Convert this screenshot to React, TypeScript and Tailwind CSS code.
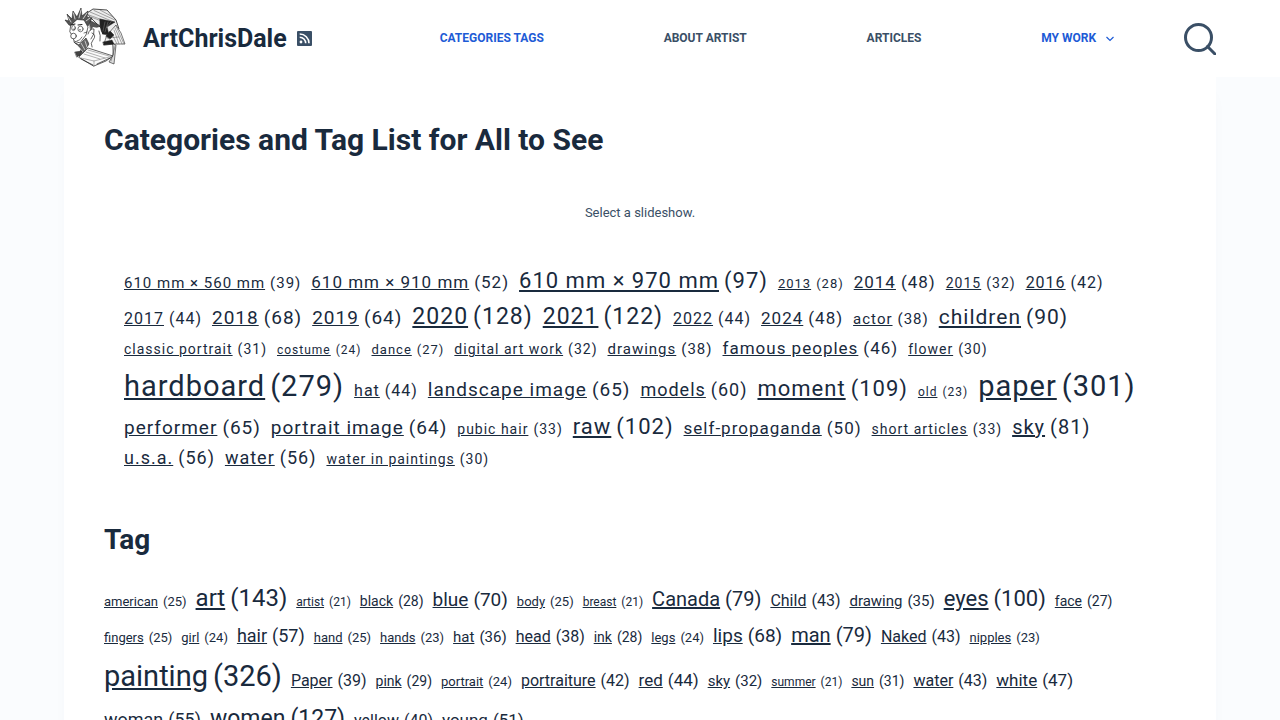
import type { ReactNode } from 'react';

interface Tag {
  name: string;
  count: number;
}

const categories: Tag[] = [
  { name: '610 mm × 560 mm', count: 39 },
  { name: '610 mm × 910 mm', count: 52 },
  { name: '610 mm × 970 mm', count: 97 },
  { name: '2013', count: 28 },
  { name: '2014', count: 48 },
  { name: '2015', count: 32 },
  { name: '2016', count: 42 },
  { name: '2017', count: 44 },
  { name: '2018', count: 68 },
  { name: '2019', count: 64 },
  { name: '2020', count: 128 },
  { name: '2021', count: 122 },
  { name: '2022', count: 44 },
  { name: '2024', count: 48 },
  { name: 'actor', count: 38 },
  { name: 'children', count: 90 },
  { name: 'classic portrait', count: 31 },
  { name: 'costume', count: 24 },
  { name: 'dance', count: 27 },
  { name: 'digital art work', count: 32 },
  { name: 'drawings', count: 38 },
  { name: 'famous peoples', count: 46 },
  { name: 'flower', count: 30 },
  { name: 'hardboard', count: 279 },
  { name: 'hat', count: 44 },
  { name: 'landscape image', count: 65 },
  { name: 'models', count: 60 },
  { name: 'moment', count: 109 },
  { name: 'old', count: 23 },
  { name: 'paper', count: 301 },
  { name: 'performer', count: 65 },
  { name: 'portrait image', count: 64 },
  { name: 'pubic hair', count: 33 },
  { name: 'raw', count: 102 },
  { name: 'self-propaganda', count: 50 },
  { name: 'short articles', count: 33 },
  { name: 'sky', count: 81 },
  { name: 'u.s.a.', count: 56 },
  { name: 'water', count: 56 },
  { name: 'water in paintings', count: 30 },
];

const tags: Tag[] = [
  { name: 'american', count: 25 },
  { name: 'art', count: 143 },
  { name: 'artist', count: 21 },
  { name: 'black', count: 28 },
  { name: 'blue', count: 70 },
  { name: 'body', count: 25 },
  { name: 'breast', count: 21 },
  { name: 'Canada', count: 79 },
  { name: 'Child', count: 43 },
  { name: 'drawing', count: 35 },
  { name: 'eyes', count: 100 },
  { name: 'face', count: 27 },
  { name: 'fingers', count: 25 },
  { name: 'girl', count: 24 },
  { name: 'hair', count: 57 },
  { name: 'hand', count: 25 },
  { name: 'hands', count: 23 },
  { name: 'hat', count: 36 },
  { name: 'head', count: 38 },
  { name: 'ink', count: 28 },
  { name: 'legs', count: 24 },
  { name: 'lips', count: 68 },
  { name: 'man', count: 79 },
  { name: 'Naked', count: 43 },
  { name: 'nipples', count: 23 },
  { name: 'painting', count: 326 },
  { name: 'Paper', count: 39 },
  { name: 'pink', count: 29 },
  { name: 'portrait', count: 24 },
  { name: 'portraiture', count: 42 },
  { name: 'red', count: 44 },
  { name: 'sky', count: 32 },
  { name: 'summer', count: 21 },
  { name: 'sun', count: 31 },
  { name: 'water', count: 43 },
  { name: 'white', count: 47 },
  { name: 'woman', count: 55 },
  { name: 'women', count: 127 },
  { name: 'yellow', count: 40 },
  { name: 'young', count: 51 },
];

const SMALLEST = 12;
const LARGEST = 29.2;

// Logarithmic weight, so one very common tag does not flatten the others.
const weight = (count: number) => Math.log10(count + 1);

function TagCloud({ items, className = '' }: { items: Tag[]; className?: string }) {
  const weights = items.map((item) => weight(item.count));
  const min = Math.min(...weights);
  const step = (LARGEST - SMALLEST) / (Math.max(...weights) - min);

  return (
    <p className={`text-[#192a3d] ${className}`}>
      {items.map((item, i) => (
        <span key={item.name}>
          <a
            href="#"
            className="mr-[5px] inline-block hover:text-[#1d5bd6]"
            style={{ fontSize: Math.round(SMALLEST + (weights[i] - min) * step) }}
          >
            <span className="underline">{item.name}</span>
            <span className="ml-[5px] inline-block">({item.count})</span>
          </a>{' '}
        </span>
      ))}
    </p>
  );
}

function NavLink({ active = false, children }: { active?: boolean; children: ReactNode }) {
  return (
    <a
      href="#"
      className={`flex items-center text-xs leading-5 font-bold uppercase ${active ? 'text-[#1d5bd6]' : 'text-[#3a4f66]'}`}
    >
      {children}
    </a>
  );
}

function Logo() {
  return (
    <svg viewBox="0 0 64 64" className="size-16 shrink-0" fill="none" stroke="#222" strokeLinejoin="round" strokeLinecap="round" aria-hidden="true">
      {/* hood */}
      <path d="M23 6 L29 2 L43 3 L52 13 L55 22 L47 28 L42 25 L36 20 L28 12Z" fill="#ececec" strokeWidth=".8" />
      <path d="M26 5 L50 15 M30 3.500 L51 13 M25 8 L44 15 M36 3 L49 10 M27 10 L40 15" stroke="#555" strokeWidth=".5" />
      <path d="M36 12 L51 15 L43 20 L45 28 L38 27 L36 19Z" fill="#222" strokeWidth=".5" />
      <path d="M41 15 L39 24 M44 15 L41 25 M47 15 L42 21" stroke="#999" strokeWidth=".4" />
      <path d="M25 13 L37 19 L31 21 L27 24Z" fill="#555" strokeWidth=".5" />
      {/* hair */}
      <path d="M5 18 L1 13 L5 14 L3 7 L8 12 L9 4 L13 10 L17 1 L18 9 L24 4 L23 10 L28 11 L24 19 L20 13 L13 12 L8 18Z" fill="#555" strokeWidth=".6" />
      <path d="M4 10 L7 15 M9.500 6 L11 12 M17 3 L15 11 M23 6 L19 12 M26 11 L22 14" stroke="#ddd" strokeWidth=".9" />
      {/* face */}
      <path d="M7 18 L13 12.500 L20 13 L24 20 L22 28 L16 36 L10 34 L9 30 L6 25Z" fill="#fff" strokeWidth=".7" />
      <circle cx="9.500" cy="29" r="2.800" fill="#fff" strokeWidth=".7" />
      <ellipse cx="9.500" cy="21" rx="1.800" ry="2.600" fill="#fff" strokeWidth=".6" />
      <ellipse cx="16.500" cy="22" rx="2.600" ry="2.800" fill="#fff" strokeWidth=".6" />
      <path d="M10 22v.5 M16 22.500v.5 M7 18l4-1 M14 18l4-.5" strokeWidth="1.100" />
      <path d="M13 34 Q16 34 18 30 M20 26l3-1" strokeWidth=".6" />
      {/* collar and hands */}
      <path d="M10 35 L15 38 L22 31 L25 37 L20 45 L15 49 L17 42Z" fill="#666" strokeWidth=".6" />
      <path d="M13 38l6 7 M17 36l4 7 M21 34l2 6" stroke="#eee" strokeWidth=".7" />
      <path d="M24 27 L29 20 L34 21 L38 26 L40 40 L34 45 L26 41Z" fill="#fff" stroke="none" />
      <path d="M24 27 Q26 21 30 22 Q31 27 27 32 M28 26 Q33 28 29 33 Q26 36 28 40 M35 24 Q37 28 36 34" strokeWidth=".7" />
      {/* sleeve */}
      <path d="M43 28 L52 18 L57 26 L61 37 L51 37 L40 38Z" fill="#f5f5f5" strokeWidth=".6" />
      <path d="M52 19 L60 37 M51 21 L58 37 M50 23 L55 37 M47 25 L53 37 M43 31 L55 30" stroke="#555" strokeWidth=".5" />
      <path d="M42 29 L46 24 L50 28 L46 32Z M39 35 L48 33 L50 37 L40 38Z" fill="#222" strokeWidth=".4" />
      <path d="M49 37 L52 38 L50 57 L45 55 L49 48Z" fill="#ddd" strokeWidth=".6" />
      <path d="M51 40 L47 54 M50 39 L49 48" stroke="#555" strokeWidth=".5" />
      {/* book */}
      <path d="M15 50 L24 41 L49 49 L42 54 L30 59Z" fill="#fafafa" strokeWidth=".7" />
      <path d="M17 51 L30 54 L49 49 M30 54 L30 59 M24 43 L45 49 M22 45 L41 51 M20 47 L36 52" stroke="#666" strokeWidth=".5" />
      <path d="M17 52 L29 58 M33 57 L46 51" strokeWidth=".7" />
      <path d="M11 45 L18 44 L16 48 L13 50Z" fill="#444" strokeWidth=".5" />
    </svg>
  );
}

function Header() {
  return (
    <header className="bg-white px-16">
      <div className="flex h-[77px] items-center">
        <Logo />
        <a href="#" className="ml-[15px] text-[25px] font-bold text-[#192a3d]">
          ArtChrisDale
        </a>
        <a href="#" aria-label="RSS feed" className="ml-[10px]">
          <svg viewBox="0 0 15 15" className="size-[15px]" fill="none" aria-hidden="true">
            <rect width="15" height="15" rx="1" fill="#3a4f66" />
            <circle cx="4" cy="11" r="1.400" fill="#fff" />
            <path d="M2.700 6.300a6 6 0 0 1 6 6M2.700 3a9.300 9.300 0 0 1 9.300 9.300" stroke="#fff" strokeWidth="1.600" />
          </svg>
        </a>
        <nav className="mr-[10px] ml-[68px] flex flex-1 items-center justify-around pb-0.5">
          <NavLink active>Categories Tags</NavLink>
          <NavLink>About Artist</NavLink>
          <NavLink>Articles</NavLink>
          <NavLink active>
            My Work
            <svg viewBox="0 0 8 8" className="ml-[10px] size-2" fill="none" stroke="currentColor" strokeWidth="1.200" aria-hidden="true">
              <path d="M.5 3 4 6.500l3.500-3.500" />
            </svg>
          </NavLink>
        </nav>
        <button type="button" aria-label="Search" className="text-[#3a4f66]">
          <svg viewBox="0 0 32 32" className="size-8" fill="none" stroke="currentColor" strokeWidth="3" aria-hidden="true">
            <circle cx="14.500" cy="14.500" r="13" />
            <path d="M23.500 23.500 31 31" strokeLinecap="round" />
          </svg>
        </button>
      </div>
    </header>
  );
}

export default function App() {
  return (
    <div className="min-h-screen bg-[#fafcfe] font-[Roboto,sans-serif] leading-[1.65] text-[#3a4f66]">
      <Header />
      <main className="mx-16 bg-white px-10 pt-10 pb-10 shadow-[0_12px_18px_-6px_rgba(34,56,101,0.04)]">
        <h1 className="text-[30px] leading-[45px] font-bold text-[#192a3d]">
          Categories and Tag List for All to See
        </h1>
        <p className="mt-10 text-center text-[13px]">Select a slideshow.</p>
        <TagCloud items={categories} className="mt-5 p-5 leading-[1.6] tracking-[1px]" />
        <h2 className="mt-7 text-[28px] leading-[38px] font-bold text-[#192a3d]">Tag</h2>
        <TagCloud items={tags} className="mt-5 leading-[1.66]" />
      </main>
    </div>
  );
}
